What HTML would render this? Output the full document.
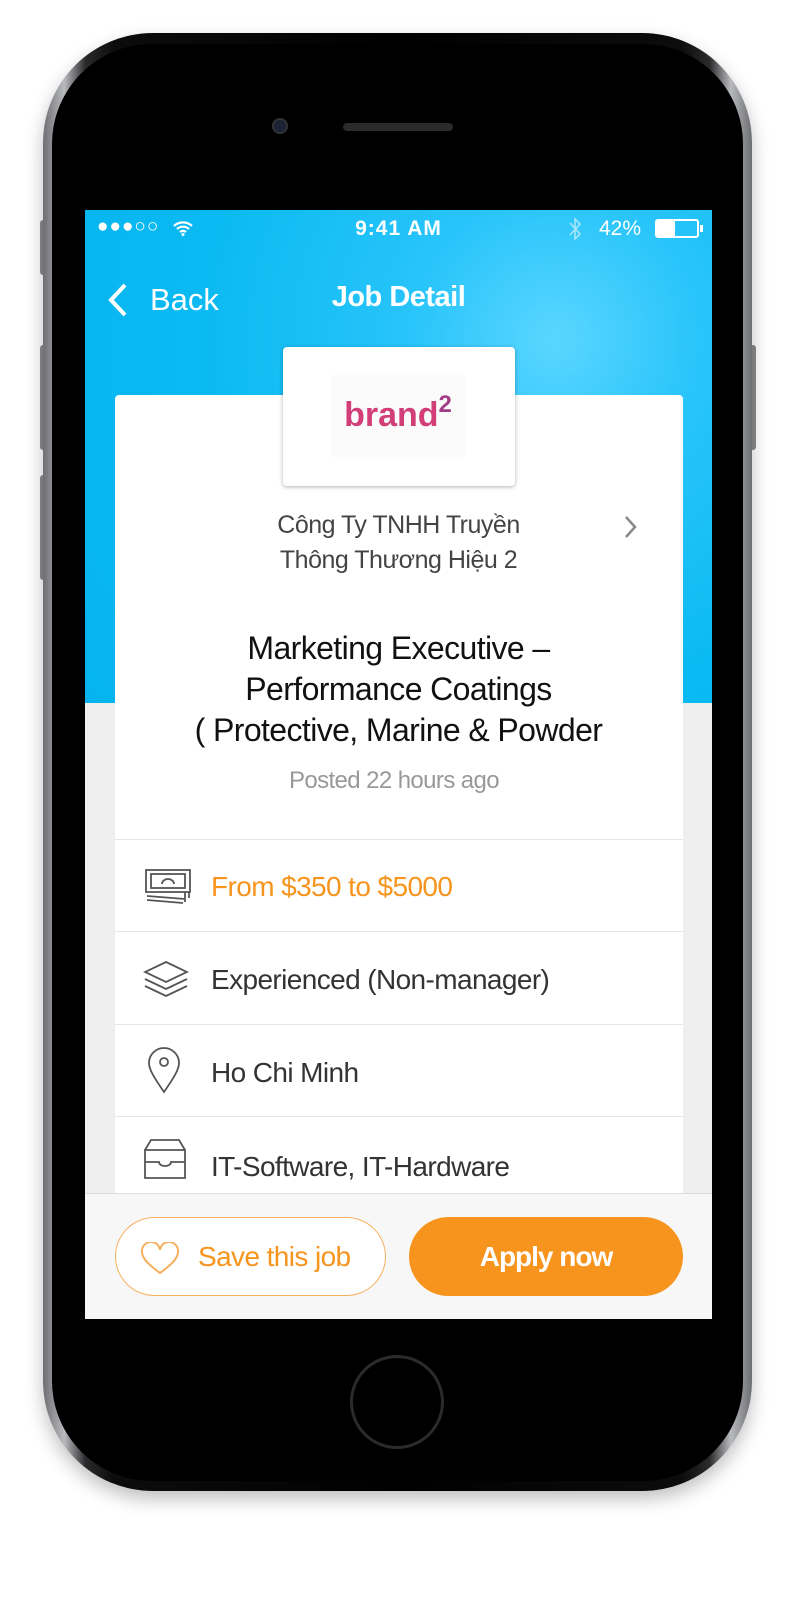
<!DOCTYPE html>
<html><head><meta charset="utf-8"><style>
*{margin:0;padding:0;box-sizing:border-box}
body{width:792px;height:1620px;background:#fff;position:relative;overflow:hidden;font-family:"Liberation Sans",sans-serif}
.abs{position:absolute}
.phone{left:43px;top:33px;width:709px;height:1458px;border-radius:110px;background:linear-gradient(90deg,#6d6e72,#b9babd 3%,#2a2a2c 6%,#0c0c0c 10%,#000 50%,#0c0c0c 90%,#2a2a2c 94%,#b9babd 97%,#6d6e72);box-shadow:0 8px 18px rgba(0,0,0,.25)}
.inner{left:52px;top:44px;width:691px;height:1437px;border-radius:100px;background:#000}
.screen{left:85px;top:210px;width:627px;height:1109px;background:#efefef;overflow:hidden}
.hdr{left:0;top:0;width:627px;height:493px;background:radial-gradient(circle at 470px 130px,#5ad6ff 0,#27c4fa 25%,#0bbaf2 60%,#06b3ee 100%)}
.w{color:#fff}
.card{left:30px;top:185px;width:568px;height:1000px;background:#fff;border-radius:4px}
.sep{left:30px;width:568px;height:1px;background:#e6e6e6}
.row{left:126px;font-size:28px;color:#333;letter-spacing:-0.6px}
.btm{left:0;top:983px;width:627px;height:126px;background:#f7f7f7;border-top:1px solid #ddd}
</style></head><body>
<div class="abs" style="left:40px;top:220px;width:8px;height:55px;background:#8a8b8e;border-radius:3px"></div>
<div class="abs" style="left:40px;top:345px;width:8px;height:105px;background:#8a8b8e;border-radius:3px"></div>
<div class="abs" style="left:40px;top:475px;width:8px;height:105px;background:#8a8b8e;border-radius:3px"></div>
<div class="abs" style="left:748px;top:345px;width:8px;height:105px;background:#8a8b8e;border-radius:3px"></div>
<div class="abs phone"></div>
<div class="abs inner"></div>
<div class="abs" style="left:272px;top:118px;width:16px;height:16px;border-radius:50%;background:#1b2235;border:2px solid #333"></div>
<div class="abs" style="left:343px;top:123px;width:110px;height:8px;border-radius:4px;background:#2a2a2a"></div>
<div class="abs" style="left:350px;top:1355px;width:94px;height:94px;border-radius:50%;border:3px solid #2b2b2b"></div>
<div class="abs screen">
 <div class="abs hdr"></div>
 <div class="abs w" style="left:12px;top:6px;font-size:19px;letter-spacing:1px">●●●○○</div>
 <svg class="abs" style="left:87px;top:10px" width="22" height="16" viewBox="0 0 22 16"><path d="M2 6a13 13 0 0 1 18 0M5 9a9 9 0 0 1 12 0M8 12a4.5 4.5 0 0 1 6 0" stroke="#fff" stroke-width="2.2" fill="none"/><circle cx="11" cy="14.5" r="1.5" fill="#fff"/></svg>
 <div class="abs w" style="left:0;width:627px;text-align:center;top:7px;font-size:21px;font-weight:bold;letter-spacing:1px">9:41 AM</div>
 <svg class="abs" style="left:483px;top:6px" width="14" height="26"><path d="M2 7l10 11-5 5V3l5 5L2 19" stroke="#a6e6fb" stroke-width="1.6" fill="none"/></svg>
 <div class="abs w" style="left:514px;top:7px;font-size:21px">42%</div>
 <div class="abs" style="left:570px;top:9px;width:44px;height:19px;border:2px solid #fff;border-radius:3px"><div style="width:18px;height:100%;background:#fff"></div></div>
 <div class="abs" style="left:615px;top:15px;width:3px;height:7px;background:#fff"></div>
 <svg class="abs" style="left:22px;top:72px" width="22" height="36"><path d="M18 3 4 18l14 15" stroke="#fff" stroke-width="4" fill="none"/></svg>
 <div class="abs w" style="left:65px;top:72px;font-size:31px">Back</div>
 <div class="abs w" style="left:0;width:627px;text-align:center;top:71px;font-size:29px;font-weight:bold;letter-spacing:-.5px">Job Detail</div>
 <div class="abs card"></div>
 <div class="abs" style="left:198px;top:137px;width:232px;height:139px;background:#fff;border-radius:4px;box-shadow:0 1px 4px rgba(0,0,0,.3)"></div>
 <div class="abs" style="left:246px;top:165px;width:134px;height:82px;background:#fbfbfb;text-align:center;padding-top:16px;font-size:34px;font-weight:bold;color:#d23e78">brand<sup style="font-size:24px;color:#a23d85;vertical-align:14px">2</sup></div>
 <div class="abs" style="left:0;width:627px;text-align:center;top:298px;font-size:25px;line-height:35px;color:#444;letter-spacing:-.5px">Công Ty TNHH Truyền<br>Thông Thương Hiệu 2</div>
 <svg class="abs" style="left:538px;top:304px" width="16" height="26"><path d="M3 3l9 10-9 10" stroke="#888" stroke-width="2.5" fill="none"/></svg>
 <div class="abs" style="left:0;width:627px;text-align:center;top:418px;font-size:32px;line-height:41px;color:#111;letter-spacing:-.6px">Marketing Executive –<br>Performance Coatings<br>( Protective, Marine &amp; Powder</div>
 <div class="abs" style="left:0;width:618px;text-align:center;top:557px;font-size:24px;color:#999;letter-spacing:-.6px">Posted 22 hours ago</div>
 <div class="abs sep" style="top:629px"></div>
 <div class="abs sep" style="top:721px"></div>
 <div class="abs sep" style="top:814px"></div>
 <div class="abs sep" style="top:906px"></div>
 <svg class="abs" style="left:60px;top:658px" width="46" height="36" fill="none" stroke="#555" stroke-width="1.8"><rect x="1" y="2" width="44" height="22"/><rect x="6" y="6" width="34" height="14"/><path d="M17 16a6 5 0 0 1 12 0M2 28l38 3M2 32l36 3M40 24v10M44 24v6"/></svg>
 <div class="abs row" style="top:661px;color:#f7941d">From $350 to $5000</div>
 <svg class="abs" style="left:58px;top:750px" width="46" height="40" fill="none" stroke="#555" stroke-width="1.8"><path d="M23 2 44 12 23 22 2 12Z"/><path d="M2 19l21 10 21-10M2 26l21 10 21-10"/></svg>
 <div class="abs row" style="top:754px">Experienced (Non-manager)</div>
 <svg class="abs" style="left:62px;top:836px" width="34" height="48" fill="none" stroke="#555" stroke-width="1.8"><path d="M17 46C6 30 2 23 2 17a15 15 0 0 1 30 0c0 6-4 13-15 29Z"/><circle cx="17" cy="16" r="4"/></svg>
 <div class="abs row" style="top:847px">Ho Chi Minh</div>
 <svg class="abs" style="left:58px;top:928px" width="44" height="42" fill="none" stroke="#555" stroke-width="1.8"><path d="M2 12h40v28H2ZM2 12 8 2h28l6 10M2 24h14a6 4 0 0 0 12 0h14"/></svg>
 <div class="abs row" style="top:941px">IT-Software, IT-Hardware</div>
 <div class="abs btm"></div>
 <div class="abs" style="left:30px;top:1007px;width:271px;height:79px;border:1.5px solid #f7b060;border-radius:40px;background:#fff"></div>
 <svg class="abs" style="left:55px;top:1032px" width="40" height="34"><path d="M20 31C6 21 2 15 2 10a9 9 0 0 1 18-2 9 9 0 0 1 18 2c0 5-4 11-18 21Z" fill="none" stroke="#f7b060" stroke-width="2"/></svg>
 <div class="abs" style="left:113px;top:1031px;font-size:28px;color:#f7941d;letter-spacing:-.6px">Save this job</div>
 <div class="abs" style="left:324px;top:1007px;width:274px;height:79px;border-radius:40px;background:#f7941d;color:#fff;font-size:28px;font-weight:bold;text-align:center;line-height:79px;letter-spacing:-1px">Apply now</div>
</div>
</body></html>
